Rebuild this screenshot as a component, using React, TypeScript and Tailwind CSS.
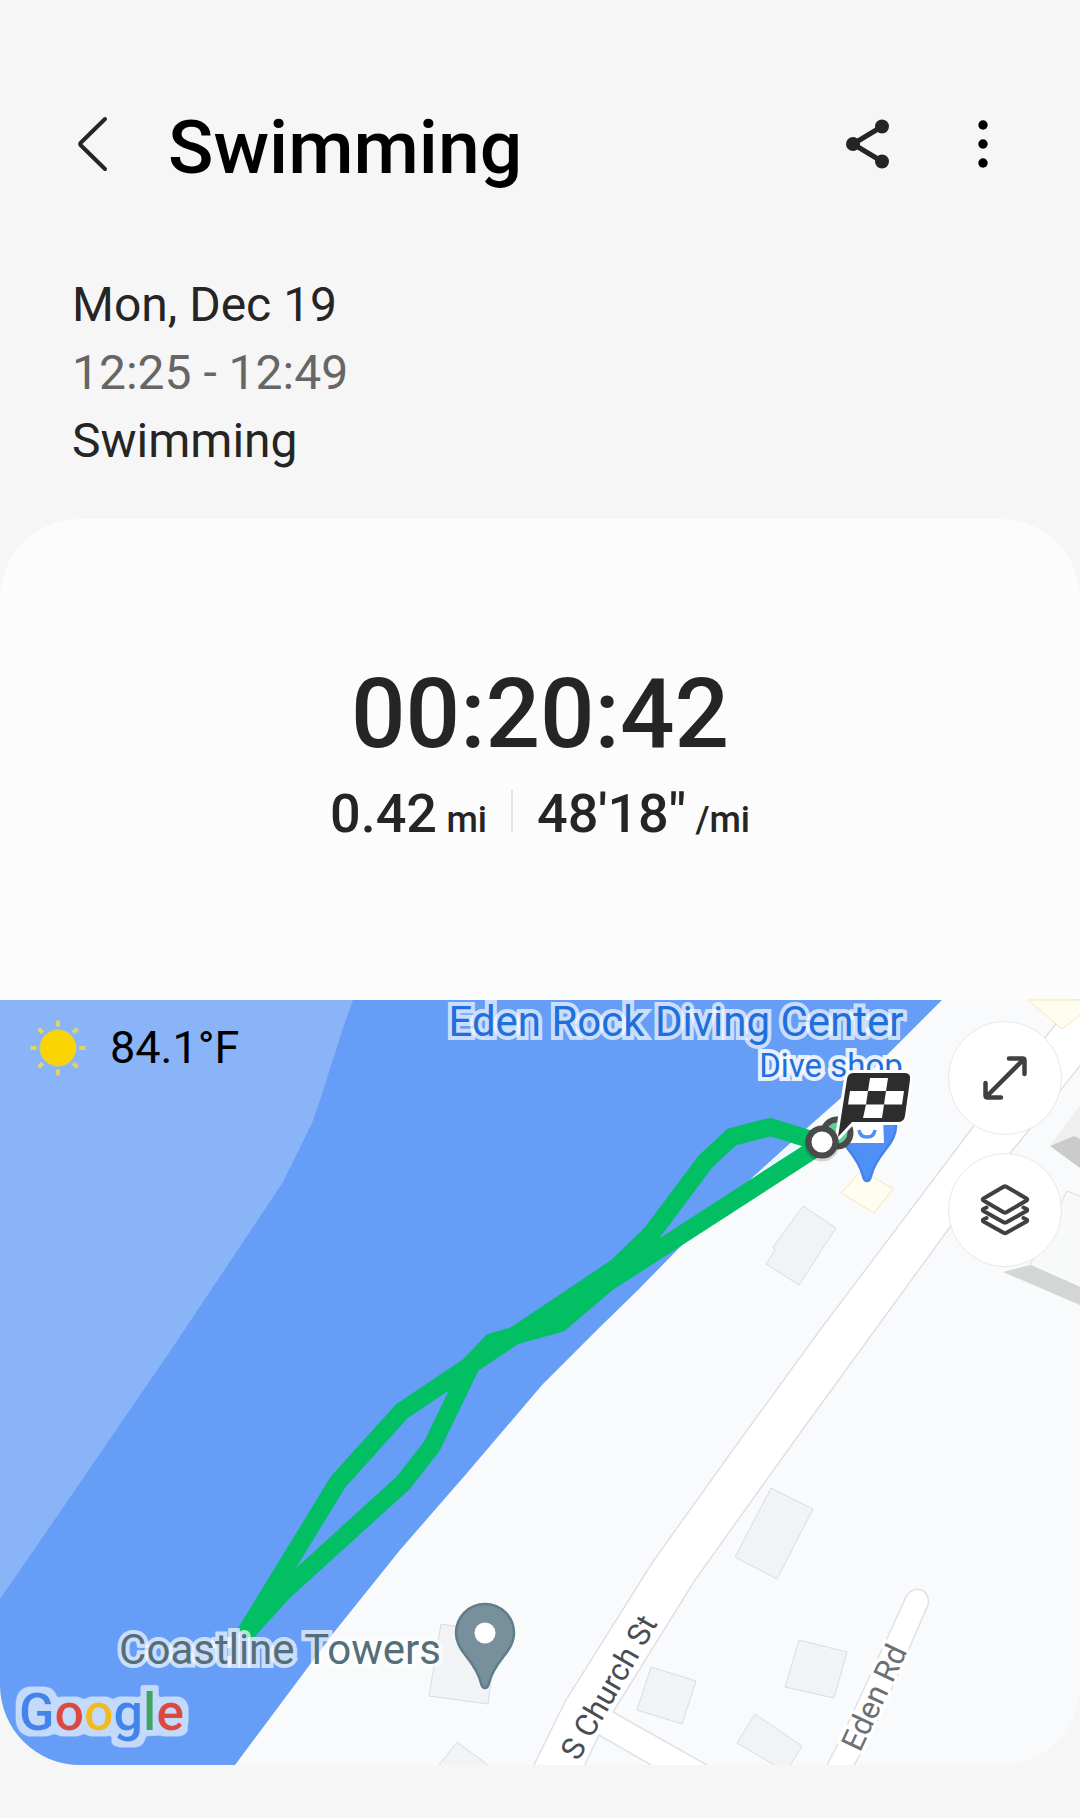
import type { ReactNode } from "react";

// -------------------------------------
// Icons

function BackIcon() {
  return (
    <svg className="size-[60px]" viewBox="0 0 60 60" fill="none" stroke="#252525" strokeWidth={4} strokeLinecap="round" strokeLinejoin="round">
      <path d="M41 5 17 28.500 Q15.500 30 17 31.500 L41 55" />
    </svg>
  );
}

function ShareIcon() {
  return (
    <svg className="size-[60px]" viewBox="0 0 60 60" fill="#252525" stroke="#252525">
      <path d="M45 12.500 16 30 45 47.500" fill="none" strokeWidth={5} />
      <circle cx="16" cy="30" r="7" stroke="none" />
      <circle cx="45" cy="12.500" r="7" stroke="none" />
      <circle cx="45" cy="47.500" r="7" stroke="none" />
    </svg>
  );
}

function MoreIcon() {
  return (
    <svg className="size-[60px]" viewBox="0 0 60 60">
      <circle cx="30" cy="11" r="4.700" />
      <circle cx="30" cy="30" r="4.700" />
      <circle cx="30" cy="49" r="4.700" />
    </svg>
  );
}

function SunIcon() {
  const rays = [0, 45, 90, 135, 180, 225, 270, 315];
  return (
    <svg className="size-[56px]" viewBox="-28 -28 56 56">
      <circle r="18" fill="#fbd405" stroke="#dfd04f" strokeWidth={1} />
      {rays.map((deg) => (
        <path key={deg} d="M0 -21.500V-27.500" stroke="#e3d264" strokeWidth={4} transform={`rotate(${deg})`} />
      ))}
    </svg>
  );
}

function ExpandIcon() {
  return (
    <svg className="size-[56px]" viewBox="-28 -28 56 56" fill="none" stroke="#404040" strokeWidth={4.5} strokeLinecap="round" strokeLinejoin="round">
      <path d="M-19 19 19 -19M4 -19.500H17.500Q19.500 -19.500 19.500 -17.500V-4M-19.500 5V17.500Q-19.500 19.500 -17.500 19.500H-4" />
    </svg>
  );
}

function LayersIcon() {
  return (
    <svg className="size-[56px]" viewBox="-28 -28 56 56" fill="none" stroke="#404040" strokeWidth={4} strokeLinecap="round" strokeLinejoin="round">
      <path d="M-1 -23.500Q0 -24 1 -23.500L21.500 -11.500Q23 -10.500 21.500 -9.500L1 2.500Q0 3 -1 2.500L-21.500 -9.500Q-23 -10.500 -21.500 -11.500Z" />
      <path d="M-18.500 -2.500-21.500 -1Q-23 0 -21.500 1L-1 12.500Q0 13 1 12.500L21.500 1Q23 0 21.500 -1L18.500 -2.500" />
      <path d="M-18.500 8-21.500 9.500Q-23 10.500 -21.500 11.500L-1 23Q0 23.500 1 23L21.500 11.500Q23 10.500 21.500 9.500L18.500 8" />
    </svg>
  );
}

// -------------------------------------
// Map

const buildings = [
  "803,206 836,228 799,285 766,264 775,250 773,247 793,220",
  "771,488 813,509 777,579 735,557",
  "799,640 847,652 834,698 785,687",
  "651,667 696,681 682,724 637,710",
  "755,714 802,746 786,772 737,743",
  "441,624 497,633 488,704 429,696",
  "457,742 500,774 432,774",
];

const shops = ["862,170 893,189 874,213 841,193", "1028,0 1062,29 1084,12 1084,0"];

function RouteMap() {
  return (
    <svg className="block w-full h-auto overflow-visible" viewBox="0 0 1080 765" role="img" aria-label="Route map" fontFamily="Roboto, sans-serif">
      <defs>
        <filter id="logo-halo" x="-10%" y="-20%" width="120%" height="140%">
          <feMorphology in="SourceAlpha" operator="dilate" radius="6" result="wide" />
          <feGaussianBlur in="wide" stdDeviation="1.500" result="soft" />
          <feComponentTransfer in="soft" result="edge">
            <feFuncA type="linear" slope="3" intercept="-1" />
          </feComponentTransfer>
          <feFlood floodColor="#c3dafb" />
          <feComposite in2="edge" operator="in" result="halo" />
          <feMerge>
            <feMergeNode in="halo" />
            <feMergeNode in="SourceGraphic" />
          </feMerge>
        </filter>
      </defs>

      <rect width="1080" height="765" fill="#f8fafc" />

      {/* Water */}
      <path d="M0 0H942L867 75 807 128 753 177 680 247 638 290 600 327 542 385 467 473 400 550 335 631 235 765H0Z" fill="#669df6" />
      <path d="M0 0H353L345 22 320 100 312 123 283 182 171 350 27 560 0 599Z" fill="#8ab4f8" />
      <path d="M753 177 800 136 812 150 775 177Z" fill="#ecf8ff" />

      {/* Buildings */}
      <g fill="#f1f3f4" stroke="#dadce0" strokeWidth={1}>
        {buildings.map((points) => (
          <polygon key={points} points={points} />
        ))}
      </g>

      {/* Roads */}
      <g fill="#ffffff" stroke="#dfe1e5" strokeWidth={1.5}>
        <path d="M1090 0H1075L1056 24 973 127 820 330 740 440 652 563 566 700 530 773H581L599 735 665 773H721L613 712 695 580 795 440 875 330 950 227 1029 130 1090 53Z" />
        <path d="M823 773 845 730 907 595Q913 587 922 590 930 595 928 605L875 727 850 773Z" />
      </g>

      <g fill="#fffcf0" stroke="#f5e6b4" strokeWidth={1}>
        {shops.map((points) => (
          <polygon key={points} points={points} />
        ))}
      </g>

      {/* Tall blocks on the right edge */}
      <path d="M1050 146 1080 105V139L1074 136Z" fill="#efefef" />
      <path d="M1050 146 1074 136 1080 139V168Z" fill="#c9cccb" />
      <path d="M1030 265 1067 191 1084 198V289Z" fill="#f8faf9" stroke="#dadce0" />
      <path d="M1003 272 1030 265 1080 287V305Z" fill="#d3d6d5" />

      {/* Track */}
      <g fill="none" stroke="#02bf64" strokeWidth={18}>
        <path d="M822 143 770 127 732 137 705 162 652 233 617 267 402 411 338 482 245 634" />
        <path d="M822 144 607 283 560 323 492 342 472 363 432 446 403 483 283 592 245 634" />
      </g>

      {/* Place labels */}
      <g stroke="#ffffff" strokeOpacity={0.68} strokeWidth={8} style={{ paintOrder: "stroke" }}>
        <text x="676" y="36" fontSize="42" fill="#1f6fdc" textAnchor="middle">Eden Rock Diving Center</text>
        <text x="831" y="77" fontSize="33" fill="#1f6fdc" strokeOpacity={0.85} textAnchor="middle">Dive shop</text>
        <text x="280" y="664" fontSize="42" fill="#546e7a" textAnchor="middle">Coastline Towers</text>
      </g>

      {/* Street labels */}
      <text fontSize="31" fill="#494c50" transform="translate(578 762) rotate(-60)">S Church St</text>
      <text fontSize="31" fill="#6b7075" stroke="#ffffff" strokeWidth={7} style={{ paintOrder: "stroke" }} transform="translate(860 753) rotate(-65)">Eden Rd</text>

      {/* Coastline Towers pin */}
      <path d="M485 688Q482 688 481 683 478 671 466 656 456 644 456 633A29 29 0 0 1 514 633Q514 644 504 656 492 671 489 683 488 688 485 688Z" fill="#78909c" stroke="#607d8b" strokeWidth={2.5} />
      <circle cx="485" cy="633" r="10.500" fill="#ffffff" />

      {/* Dive shop pin */}
      <path d="M867 181Q864 181 863 176 860 164 848 149 838 137 838 126A29 29 0 0 1 896 126Q896 137 886 149 874 164 871 176 870 181 867 181Z" fill="#4f90f6" stroke="#4484ea" strokeWidth={2.5} />
      <path d="M851 118H883L884 143H846Z" fill="#ffffff" />
      <path d="M859 130Q860 137 867 137T875 130" fill="none" stroke="#4f90f6" strokeWidth={3.5} />

      {/* Start and end markers */}
      <circle cx="837" cy="133" r="13.500" fill="#5fd094" stroke="#4a4a4a" strokeWidth={6} />
      <path d="M838 137 847 79Q848 73 853 73H905Q911 73 910 80L905 116Q904 122 898 122H852Z" fill="#2d2d2d" stroke="#ffffff" strokeWidth={6} strokeLinejoin="round" style={{ paintOrder: "stroke" }} />
      <g fill="#ffffff">
        <path d="M870 78H888L886 91H868Z" />
        <path d="M850 91H868L866 104.500H848Z" />
        <path d="M886 91H904L902 104.500H884Z" />
        <path d="M866 104.500H884L882 118H863Z" />
      </g>
      <circle cx="822" cy="144" r="17.500" fill="#000000" opacity={0.15} />
      <circle cx="822" cy="142" r="13.500" fill="#ffffff" stroke="#4a4a4a" strokeWidth={6} />

      {/* Provider logo */}
      <text x="19" y="730" fontSize="52" fontWeight={500} filter="url(#logo-halo)">
        <tspan fill="#4285ea">G</tspan>
        <tspan fill="#db4a3f">o</tspan>
        <tspan fill="#f2bb1d">o</tspan>
        <tspan fill="#4285ea">g</tspan>
        <tspan fill="#3ca55c">l</tspan>
        <tspan fill="#db4a3f">e</tspan>
      </text>
    </svg>
  );
}

// -------------------------------------

type MapButtonProps = {
  label: string;
  children: ReactNode;
};

function MapButton({ label, children }: MapButtonProps) {
  return (
    <button
      type="button"
      aria-label={label}
      className="flex size-[114px] items-center justify-center rounded-full border border-[#e8e8ea] bg-white"
    >
      {children}
    </button>
  );
}

export default function App() {
  return (
    <div className="min-h-screen w-full bg-[#f6f6f6] pb-[53px] font-['Roboto',sans-serif] text-[#252525]">
      {/* Top bar */}
      <header className="flex items-center pt-[97px] pr-[67px] pl-16">
        <button type="button" aria-label="Back">
          <BackIcon />
        </button>
        <h1 className="ml-11 flex-1 pt-1.5 text-[75px] leading-[88px] font-medium text-black">Swimming</h1>
        <button type="button" aria-label="Share" className="mr-14">
          <ShareIcon />
        </button>
        <button type="button" aria-label="More options">
          <MoreIcon />
        </button>
      </header>

      {/* Workout info */}
      <section className="mt-20 px-[72px] text-[48px] leading-[68px]">
        <p>Mon, Dec 19</p>
        <p className="text-[#666666]">12:25 - 12:49</p>
        <p>Swimming</p>
      </section>

      <main className="mt-11 overflow-hidden rounded-[80px] bg-[#fcfcfc]">
        {/* Summary */}
        <section className="flex flex-col items-center gap-3 pt-[139px] pb-[154px] font-medium">
          <p className="text-[96px] leading-[112px]">00:20:42</p>
          <div className="flex gap-6 text-[54px] leading-[64px]">
            <p>
              0.42 <span className="-ml-1 text-[36px] leading-none">mi</span>
            </p>
            <div className="mt-2 h-[42px] w-0.5 bg-[#e4e4e4]" />
            <p>
              48'18" <span className="-ml-1 text-[36px] leading-none">/mi</span>
            </p>
          </div>
        </section>

        {/* Route */}
        <section className="relative">
          <RouteMap />
          <div className="absolute top-5 left-[30px] flex items-center gap-6">
            <SunIcon />
            <span className="text-[45px] leading-[56px] text-black">84.1°F</span>
          </div>
          <div className="absolute top-[21px] right-[18px] flex flex-col gap-[18px]">
            <MapButton label="Expand map">
              <ExpandIcon />
            </MapButton>
            <MapButton label="Map layers">
              <LayersIcon />
            </MapButton>
          </div>
        </section>
      </main>
    </div>
  );
}
